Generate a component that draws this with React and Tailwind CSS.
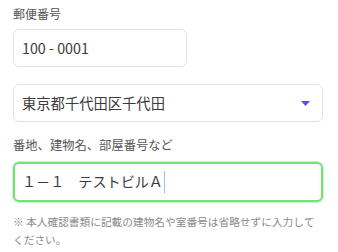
import React from 'react';

const font = { fontFamily: '"Noto Sans CJK JP", "Noto Sans", sans-serif' };

export default function App() {
  return (
    <div className="w-[338px] h-[252px] bg-white px-[13px] pt-[5px] pr-[15px]" style={font}>
      {/* Postal code */}
      <div className="text-[12px] leading-[18px] text-[#555]">郵便番号</div>
      <div className="mt-[6px] w-[174px] h-[38px] border border-[#e3e3e3] rounded-[6px] flex items-center px-[8px] text-[14.3px] text-[#3a3a3a]">
        100 - 0001
      </div>

      {/* Prefecture / city select */}
      <div className="mt-[17px] h-[38px] border border-[#e3e3e3] rounded-[6px] flex items-center justify-between pl-[8px] pr-[12px] text-[14.3px] text-[#3a3a3a]">
        <span>東京都千代田区千代田</span>
        <svg width="9" height="5" viewBox="0 0 9 5" className="mt-[1px]">
          <path d="M0 0 H9 L4.5 5 Z" fill="#6b45f0" />
        </svg>
      </div>

      {/* Address line */}
      <div className="mt-[14px] text-[12.3px] leading-[18px] text-[#555]">番地、建物名、部屋番号など</div>
      <div className="mt-[8px] h-[40px] border-2 border-[#78de78] rounded-[6px] shadow-[0_0_0_1px_#c8f2c8] flex items-center px-[7px] text-[14.1px] text-[#3a3a3a]">
        <span>１－１　テストビルＡ</span>
        <span className="inline-block w-[1px] h-[22px] bg-[#9fbcf2] ml-[1px]" />
      </div>

      {/* Note */}
      <div className="mt-[11px] text-[10.7px] leading-[18px] text-[#8a8a8a]">
        ※ 本人確認書類に記載の建物名や室番号は省略せずに入力してください。
      </div>
    </div>
  );
}
